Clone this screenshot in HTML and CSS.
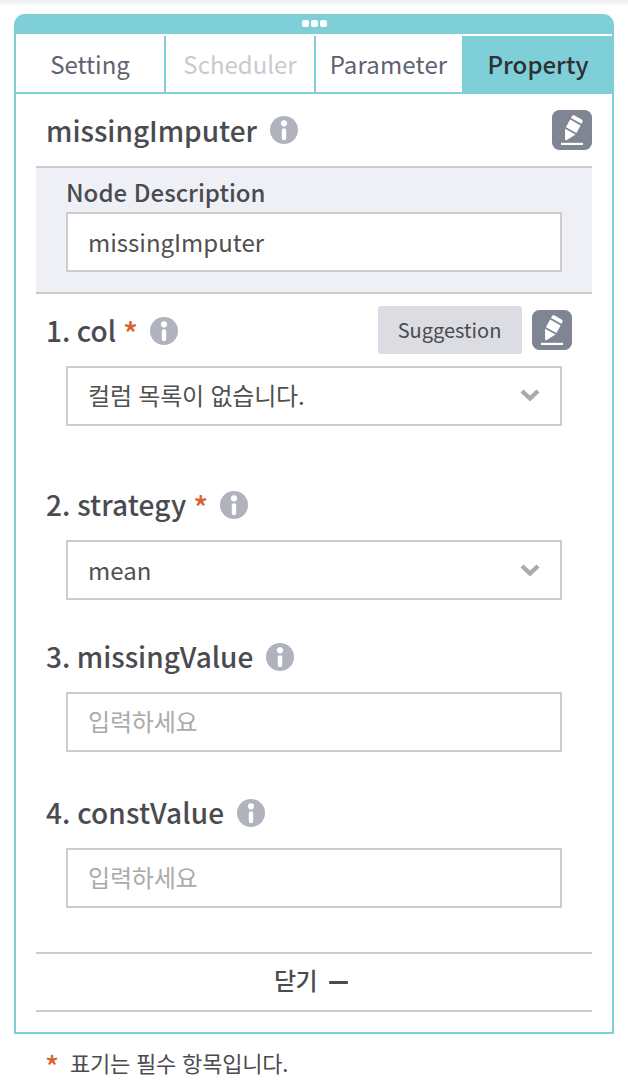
FILE: index.html
```html
<!DOCTYPE html>
<html lang="ko">
<head>
<meta charset="utf-8">
<title>missingImputer</title>
<link rel="stylesheet" href="styles.css">
</head>
<body>
<svg class="defs" width="0" height="0" aria-hidden="true">
  <symbol id="info" viewBox="0 0 28 28">
    <circle cx="14" cy="14" r="14" fill="#b0b2be"/>
    <circle cx="14" cy="7.3" r="3.1" fill="#fff"/>
    <rect x="11.8" y="12.2" width="4.4" height="12" rx="2.2" fill="#fff"/>
  </symbol>
  <symbol id="edit" viewBox="0 0 40 40">
    <rect width="40" height="40" rx="7.5" fill="#808594"/>
    <g fill="#fff" transform="translate(20.2 18.2) rotate(29)">
      <path d="M-6-8.300v-1.900q0-2 2-2h8q2 0 2 2v1.900z"/>
      <path d="M-6-6.500h12v8.600h-12z"/>
      <path d="M-6 4h12l-5.200 9.200q-.8 1-1.600 0z"/>
    </g>
    <rect x="9" y="32.800" width="22" height="2.200" fill="#fff"/>
  </symbol>
  <symbol id="chevron" viewBox="0 0 20 14">
    <path d="M2 3l8 7.500 8-7.500" fill="none" stroke="#aaa" stroke-width="4.400"/>
  </symbol>
</svg>
<main class="panel">
  <div class="handle"><i></i><i></i><i></i></div>
  <nav class="tabs">
    <div class="tab">Setting</div>
    <div class="tab disabled">Scheduler</div>
    <div class="tab last">Parameter</div>
    <div class="tab active">Property</div>
  </nav>
  <div class="content">
    <header class="title-row">
      <h1 class="label">missingImputer</h1>
      <svg class="info"><use href="#info"/></svg>
      <svg class="edit"><use href="#edit"/></svg>
    </header>
    <section class="description">
      <h2 class="sub">Node Description</h2>
      <div class="box">missingImputer</div>
    </section>
    <section class="field field-col">
      <div class="field-head">
        <span class="label">1. col</span><span class="star">*</span>
        <svg class="info"><use href="#info"/></svg>
        <div class="suggest">Suggestion</div>
        <svg class="edit"><use href="#edit"/></svg>
      </div>
      <div class="box korean">컬럼 목록이 없습니다.<svg class="chevron"><use href="#chevron"/></svg></div>
    </section>
    <section class="field field-strategy">
      <div class="field-head">
        <span class="label">2. strategy</span><span class="star">*</span>
        <svg class="info"><use href="#info"/></svg>
      </div>
      <div class="box">mean<svg class="chevron"><use href="#chevron"/></svg></div>
    </section>
    <section class="field field-missing">
      <div class="field-head">
        <span class="label">3. missingValue</span>
        <svg class="info"><use href="#info"/></svg>
      </div>
      <div class="box korean placeholder">입력하세요</div>
    </section>
    <section class="field field-const">
      <div class="field-head">
        <span class="label">4. constValue</span>
        <svg class="info"><use href="#info"/></svg>
      </div>
      <div class="box korean placeholder">입력하세요</div>
    </section>
    <div class="close"><span>닫기</span><i class="minus"></i></div>
  </div>
</main>
<footer class="note"><span class="star">*</span><span class="note-text">표기는 필수 항목입니다.</span></footer>
</body>
</html>
```
FILE: styles.css
```css
* { box-sizing: border-box; }
body {
  margin: 0;
  height: 1092px;
  padding: 14px 14px 0;
  overflow: hidden;
  background: linear-gradient(#ededee, #fff 7px) #fff;
  font-family: "Noto Sans CJK KR", sans-serif;
  font-size: 24px;
  line-height: 36px;
  color: #4a4b50;
  white-space: nowrap;
}
.defs { display: none; }
svg { display: block; flex: none; }
h1, h2 { margin: 0; }
.panel { height: 1020px; display: flex; flex-direction: column; }
.handle {
  height: 20px;
  flex: none;
  display: flex;
  justify-content: center;
  gap: 2px;
  padding-top: 6px;
  background: #7fcfd8;
  border-radius: 11px 11px 0 0;
}
.handle i { width: 7px; height: 7px; border-radius: 2px; background: #fff; }
.tabs {
  flex: none;
  display: grid;
  grid-template-columns: 150px 150px 146px 150px;
  height: 60px;
  padding-top: 2px;
  border: solid #7fcfd8;
  border-width: 0 2px 2px;
}
.tab {
  font-size: 24px;
  line-height: 56px;
  text-align: center;
  border-right: 2px solid #7fcfd8;
  color: #5e6270;
}
.tab.disabled { color: #c9cacf; }
.tab.last { border-right: 0; padding-right: 1px; letter-spacing: 0.15px; }
.tab.active { background: #7fcfd8; color: #2e3034; font-weight: 500; padding-left: 4px; }
.content { flex: 1; padding: 0 20px; border: solid #7fcfd8; border-width: 0 2px 2px; }
.title-row { display: flex; align-items: center; height: 72px; padding-left: 10px; }
.label { font-size: 28px; font-weight: 500; line-height: 40px; word-spacing: -1.4px; }
.info { width: 28px; height: 28px; margin-left: 13px; }
.edit { width: 40px; height: 40px; }
.title-row .edit { margin-left: auto; }
.description {
  height: 128px;
  padding: 6px 30px 0;
  border: solid #ccc;
  border-width: 2px 0;
  background: #eff0f5;
}
.sub { font-size: 24px; font-weight: 500; line-height: 36px; padding-bottom: 2px; }
.box {
  display: flex;
  align-items: center;
  height: 60px;
  padding: 0 20px;
  border: 2px solid #ccc;
  background: #fff;
  color: #505050;
}
.korean { font-size: 24px; letter-spacing: -0.2px; padding-bottom: 2px; }
.placeholder { color: #aaa; }
.chevron { width: 20px; height: 14px; margin-left: auto; }
.field { padding: 0 30px; }
.field-head { display: flex; align-items: center; height: 72px; margin: 0 -10px 0 -20px; }
.field-head .info { margin-top: 1px; }
.field-col { height: 174px; }
.field-strategy { height: 152px; }
.field-strategy .label, .field-const .label { letter-spacing: 0.12px; }
.field-missing { height: 156px; }
.field-const { height: 176px; }
.star { width: 14px; margin-left: 7px; padding-top: 6px; color: #d9622e; font-size: 31px; font-weight: 500; }
.suggest {
  width: 144px;
  height: 48px;
  margin: 0 10px 0 auto;
  padding-right: 1px;
  border-radius: 2px;
  background: #dcdde2;
  font-size: 20px;
  line-height: 48px;
  text-align: center;
}
.close {
  display: flex;
  justify-content: center;
  align-items: center;
  gap: 12px;
  height: 60px;
  padding-right: 6px;
  border: solid #ccc;
  border-width: 2px 0;
  font-size: 24px;
  font-weight: 500;
}
.close span { padding-bottom: 4px; letter-spacing: -0.5px; }
.minus { width: 19px; height: 3px; border-radius: 1px; background: #4a4b50; }
.note { display: flex; align-items: center; height: 58px; padding-left: 22px; font-size: 22px; letter-spacing: -0.2px; }
.note .star { margin: 0 11px 0 9px; padding-top: 4px; font-size: 29px; }
.note-text { padding-bottom: 2px; }
```
